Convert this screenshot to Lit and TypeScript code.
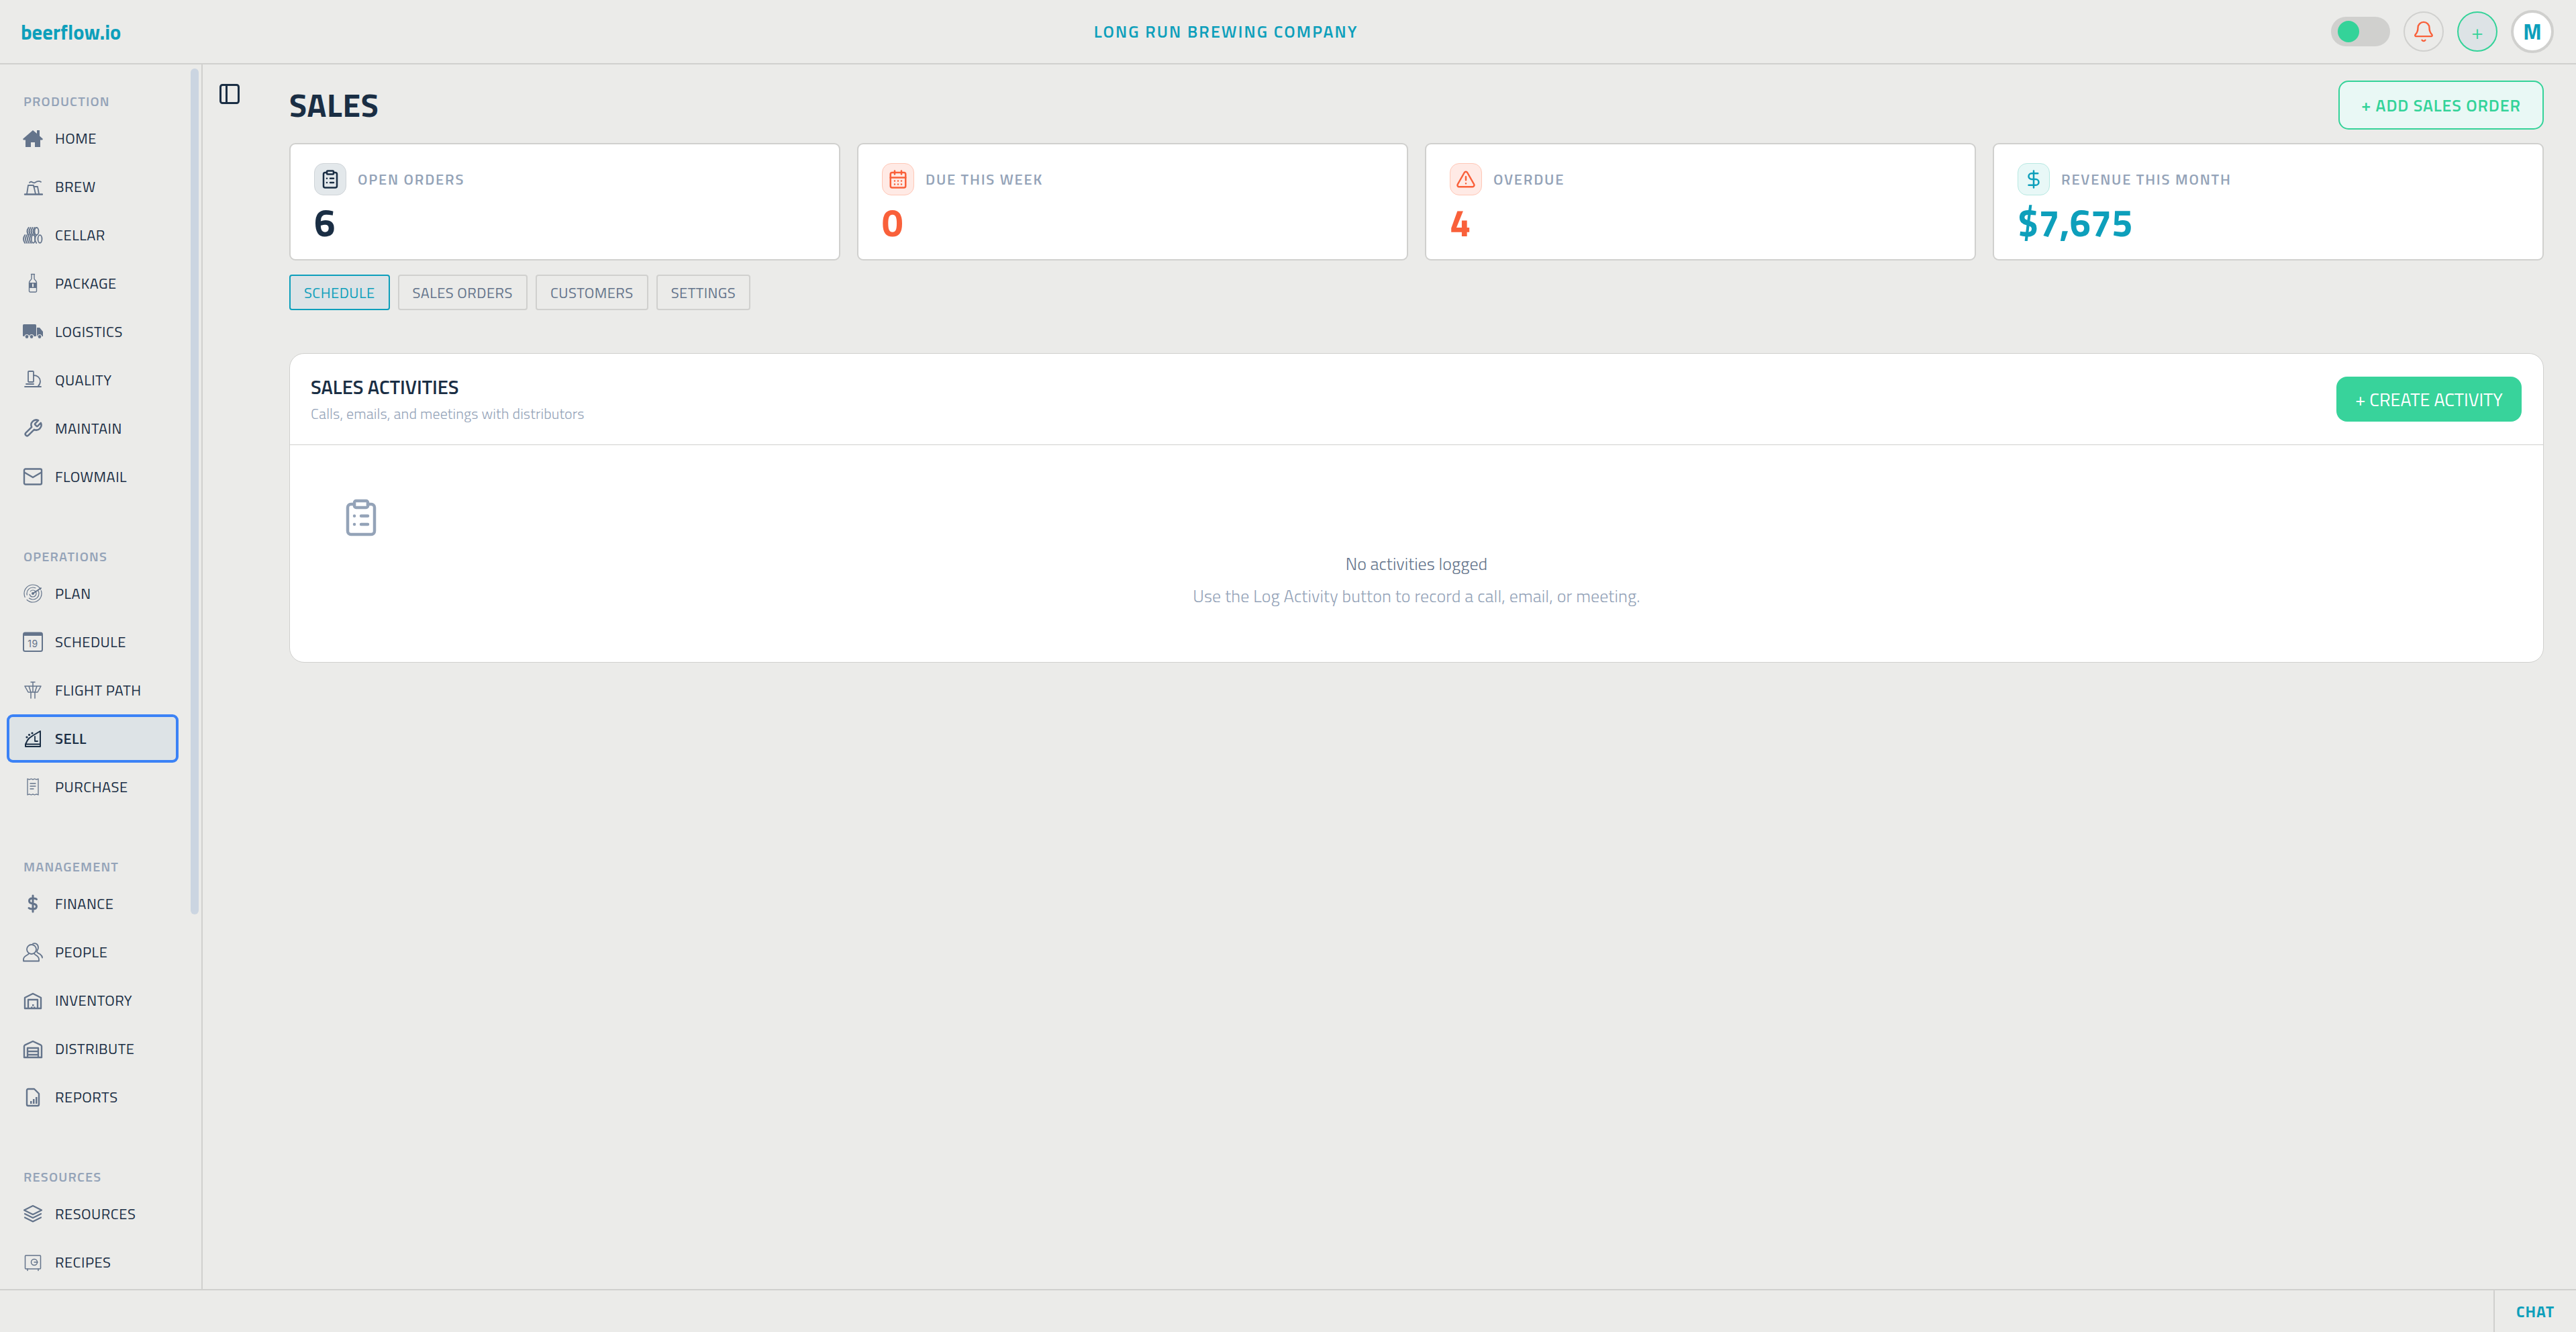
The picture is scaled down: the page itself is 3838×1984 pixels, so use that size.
import { LitElement, html, css, svg, nothing } from "lit";
import { customElement } from "lit/decorators.js";

const I = (body: unknown, vb = "0 0 30 30") => html`<svg viewBox=${vb} width="30" height="30" fill="none" stroke="currentColor" stroke-width="2" stroke-linecap="round" stroke-linejoin="round">${body}</svg>`;

const stripes = (xs: number[], y: number, h: number) => xs.map((x) => svg`<path stroke-width="1.900" d="M${x + 1.2} ${y}c-2.600 ${h * 0.3}-2.600 ${h * 0.7} 0 ${h}"/>`);

const icons: Record<string, unknown> = {
  home: I(svg`<path fill="currentColor" stroke="none" d="M15 3l6 5V3h4v8.500l5 4.500-1 1.500h-3V28h-8v-7h-6v7H4V17.500H1L0 16z"/>`),
  brew: I(svg`<path d="M3 26.500h26" stroke-width="2.400"/><path d="M6 26l2-13h8l3 13M16 15h6l2 11M10 9c3-4 5 2 8 0s6-3 9-1" stroke-width="1.800"/>`),
  cellar: I(svg`${stripes([7.5, 10.5, 13.5, 16.5], 4, 11)}<ellipse cx="20.500" cy="9.500" rx="3" ry="5.500" stroke-width="1.800"/>${stripes([2, 5, 8, 11], 15, 12)}<ellipse cx="15.500" cy="21" rx="2.800" ry="5.800" stroke-width="1.800"/>${stripes([19], 15, 12)}<ellipse cx="25.500" cy="21" rx="3" ry="5.800" stroke-width="1.800"/>`),
  package: I(svg`<path stroke-width="1.400" d="M12.500 1.500h5M13 2v6c0 2-3.500 3-3.500 6v12.500a1.500 1.500 0 0 0 1.500 1.500h8a1.500 1.500 0 0 0 1.500-1.500V14c0-3-3.500-4-3.500-6V2"/><rect x="10" y="14" width="10" height="8" fill="currentColor" stroke="none"/><rect x="14" y="15.500" width="2" height="5" fill="#ebebe9" stroke="none"/>`),
  logistics: I(svg`<rect x="0" y="4" width="20" height="18" rx="1.500" fill="currentColor" stroke="none"/><path fill="currentColor" stroke="none" d="M21 9h4l5 6v7H21z"/><g fill="currentColor" stroke="#ebebe9" stroke-width="1.200"><circle cx="6" cy="22.500" r="3"/><circle cx="13" cy="22.500" r="3"/><circle cx="25" cy="22.500" r="3"/></g>`),
  quality: I(svg`<rect x="8" y="2" width="8" height="16" rx="1" stroke-width="1.800"/><path d="M16 8c6 0 10 4 10 9 0 3-1 5-3 7M5 21h11M3 25h24" stroke-width="1.800"/>`),
  maintain: html`<svg viewBox="0 0 24 24" width="30" height="30" fill="none" stroke="currentColor" stroke-width="2" stroke-linecap="round" stroke-linejoin="round"><path d="M14.700 6.300a1 1 0 0 0 0 1.400l1.600 1.600a1 1 0 0 0 1.400 0l3.770-3.770a6 6 0 0 1-7.940 7.940l-6.910 6.910a2.120 2.120 0 0 1-3-3l6.910-6.910a6 6 0 0 1 7.940-7.940l-3.760 3.760z"/></svg>`,
  flowmail: I(svg`<rect x="2" y="3.500" width="26" height="23" rx="2" stroke-width="2.400"/><path d="M3 9l12 7 12-7" stroke-width="2.400"/>`),
  plan: I(svg`<circle cx="15" cy="15" r="13" stroke-width="1.200" stroke-dasharray="30 5 40 2"/><circle cx="15" cy="15" r="9" stroke-width="1.200" stroke-dasharray="20 6"/><circle cx="15" cy="15" r="5" stroke-width="1.200" stroke-dasharray="14 5"/><circle cx="15" cy="15" r="2" fill="currentColor" stroke="none"/><path d="M15 15l12-8" stroke-width="2"/>`),
  schedule: html`<svg viewBox="0 0 30 30" width="30" height="30" fill="none" stroke="currentColor" stroke-width="2" stroke-linecap="round" stroke-linejoin="round"><rect x="1" y="1.500" width="28" height="27.500" rx="2.500"/><rect x="1" y="1" width="28" height="5" fill="currentColor" stroke="none"/><text class="day" x="15" y="22.500" text-anchor="middle" stroke="none" fill="currentColor">19</text></svg>`,
  flight: I(svg`<path stroke-width="1.500" d="M12 3h6M15 3v6M3 9h24l-5 9H8zM9 9l3 9M21 9l-3 9M15 9v9M12 18v9M18 18v9"/>`),
  sell: I(svg`<path stroke-width="2" d="M26 4v23H4v-3.500l3-6 2.500-3 5.500-4zM4 23.500h22"/><path stroke-width="1.800" d="M18 12v7h4"/><g fill="currentColor" stroke="none"><circle cx="6" cy="13" r="1.600"/><circle cx="9.500" cy="9.500" r="1.600"/><circle cx="14" cy="7" r="1.600"/></g>`),
  purchase: I(svg`<path stroke-width="1.300" d="M7 3l2.700 1.200L12.500 3l2.500 1.200L17.500 3l2.800 1.200L23 3v24l-2.700-1.200-2.800 1.200-2.500-1.200-2.500 1.200-2.800-1.200L7 27zM11 10h8M11 14h8M11 18h5"/>`),
  finance: I(svg`<path stroke-width="3" d="M15 3v24M20.500 8.500C19 7 17 7 14.500 7 11.500 7 9.500 8.500 9.500 11s2 3.500 5.500 4 5.500 1.500 5.500 4-2 4-5.500 4c-2.500 0-4.500 0-6-1.500"/>`),
  people: I(svg`<circle cx="13" cy="11" r="7" stroke-width="1.800"/><path stroke-width="1.800" d="M9 17c0 3-8 3-8 9v2.500h23V26c0-6-7-6-7-9M15 2.500c4-1.500 8 1 8 6 0 3-2 4-2 6s2.500 2 5 4 3 3.500 3 5"/>`),
  inventory: I(svg`<path stroke-width="2.400" d="M3 27V11l12-6 12 6v16zM8 27V14h14v13"/><g fill="currentColor" stroke="none"><rect x="12" y="24.500" width="2.500" height="2.500"/><rect x="16" y="24.500" width="2.500" height="2.500"/><rect x="14" y="21" width="2.500" height="2.500"/></g>`),
  distribute: I(svg`<path stroke-width="2.400" d="M2 28V11.500a2 2 0 0 1 1-1.800L15 4l12 5.700a2 2 0 0 1 1 1.800V28zM7 28V14h16v14M7 19h16M7 24h16"/>`),
  reports: I(svg`<path stroke-width="2.400" d="M6 5a2 2 0 0 1 2-2h9l7 7v16a2 2 0 0 1-2 2H8a2 2 0 0 1-2-2z"/><g fill="currentColor" stroke="none"><rect x="11" y="21" width="2.500" height="4"/><rect x="15" y="18" width="2.500" height="7"/><rect x="19" y="15" width="2.500" height="10"/></g>`),
  resources: I(svg`<path stroke-width="2.200" d="M15 3l13 6.500L15 16 2 9.500zM3 15l12 6 12-6M3 20.500l12 6 12-6"/>`),
  recipes: I(svg`<rect x="3.500" y="5" width="23" height="20" rx="1" stroke-width="1.500"/><circle cx="17" cy="15" r="4.500" stroke-width="1.500"/><path stroke-width="1.500" d="M17 15h5M7 25v2.500M23 25v2.500"/>`),
};

const clip = svg`<rect x="8" y="2" width="8" height="4" rx="1"/><path d="M16 4h2a2 2 0 0 1 2 2v14a2 2 0 0 1-2 2H6a2 2 0 0 1-2-2V6a2 2 0 0 1 2-2h2"/><path d="M12 11h4M12 16h4M8 11h.01M8 16h.01"/>`;
const L = (b: unknown, size = 30, w = 2) => html`<svg viewBox="0 0 24 24" width=${size} height=${size} fill="none" stroke="currentColor" stroke-width=${w} stroke-linecap="round" stroke-linejoin="round">${b}</svg>`;

const sections: [string, [string, string][]][] = [
  ["PRODUCTION", [["home", "HOME"], ["brew", "BREW"], ["cellar", "CELLAR"], ["package", "PACKAGE"], ["logistics", "LOGISTICS"], ["quality", "QUALITY"], ["maintain", "MAINTAIN"], ["flowmail", "FLOWMAIL"]]],
  ["OPERATIONS", [["plan", "PLAN"], ["schedule", "SCHEDULE"], ["flight", "FLIGHT PATH"], ["sell", "SELL"], ["purchase", "PURCHASE"]]],
  ["MANAGEMENT", [["finance", "FINANCE"], ["people", "PEOPLE"], ["inventory", "INVENTORY"], ["distribute", "DISTRIBUTE"], ["reports", "REPORTS"]]],
  ["RESOURCES", [["resources", "RESOURCES"], ["recipes", "RECIPES"]]],
];

const stats = [
  { k: "navy", label: "OPEN ORDERS", value: "6", icon: clip },
  { k: "orange", label: "DUE THIS WEEK", value: "0", icon: svg`<path d="M8 2v4M16 2v4"/><rect x="3" y="4" width="18" height="18" rx="2"/><path d="M3 10h18M8 14h.01M12 14h.01M16 14h.01M8 18h.01M12 18h.01M16 18h.01"/>` },
  { k: "orange", label: "OVERDUE", value: "4", icon: svg`<path d="m21.730 18-8-14a2 2 0 0 0-3.480 0l-8 14A2 2 0 0 0 4 21h16a2 2 0 0 0 1.730-3"/><path d="M12 9v4M12 17h.01"/>` },
  { k: "teal", label: "REVENUE THIS MONTH", value: "$7,675", icon: svg`<path d="M12 2v20M17 5H9.500a3.500 3.500 0 0 0 0 7h5a3.500 3.500 0 0 1 0 7H6"/>` },
];

@customElement("app-root")
export class AppRoot extends LitElement {
  static styles = css`
    :host { display: block; width: 3838px; height: 1984px; overflow: hidden; background: #ebebe9; font-family: "Titillium Web", "Roboto", sans-serif; color: #1a2e44; }
    .shell { display: grid; grid-template-rows: 96px 1fr 64px; height: 100%; }
    .top { display: flex; align-items: center; justify-content: space-between; padding: 0 33px 0 31px; border-bottom: 2px solid #d0d0ce; }
    .logo { font-size: 30.500px; font-weight: 700; color: #0d9fbb; }
    .company { font-size: 25px; font-weight: 600; letter-spacing: 2.100px; color: #0d9fbb; }
    .actions { display: flex; align-items: center; gap: 20px; }
    .toggle { width: 88px; height: 44px; border-radius: 22px; background: #d0d0ce; display: flex; align-items: center; padding-left: 10px; box-sizing: border-box; }
    .knob { width: 32px; height: 32px; border-radius: 50%; background: #34d399; }
    .round { width: 60px; height: 60px; box-sizing: border-box; border-radius: 50%; border: 2px solid #d0d0ce; display: flex; align-items: center; justify-content: center; color: #f9603a; }
    .round.add { border-color: #34d399; background: #dde3e6; color: #34d399; font-size: 32px; font-weight: 300; }
    .round.user { width: 64px; height: 64px; border-width: 4px; background: #fff; color: #0d9fbb; font-size: 32px; font-weight: 700; }
    .middle { display: flex; min-height: 0; }
    .side { position: relative; width: 302px; flex: none; box-sizing: border-box; border-right: 2px solid #d0d0ce; padding: 43px 34px 0 10px; overflow: hidden; }
    .thumb { position: absolute; left: 284px; top: 6px; width: 12px; height: 1260px; border-radius: 6px; background: #cbd5e1; }
    .section + .section { margin-top: 71px; }
    .sec-label { font-size: 20px; line-height: 24px; font-weight: 600; letter-spacing: 1.200px; color: #94a3b8; padding-left: 25px; margin-bottom: 7px; }
    .row { display: flex; align-items: center; height: 72px; box-sizing: border-box; padding-left: 24px; gap: 18px; border-radius: 9px; font-size: 22px; letter-spacing: 0.500px; white-space: nowrap; }
    .row svg { display: block; flex: none; color: #64748b; }
    .row .day { font-size: 14px; font-family: "Inter", sans-serif; }
    .row.on { background: #dde3e6; box-shadow: inset 0 0 0 4px #3b82f6; font-weight: 600; }
    .row.on svg { color: #1a2e44; }
    .rail { width: 129px; flex: none; padding: 26px 0 0 22px; box-sizing: border-box; color: #1a2e44; }
    .rail svg { display: block; }
    .content { flex: 1; min-width: 0; padding: 24px 48px 0 0; }
    .head { display: flex; align-items: center; justify-content: space-between; height: 73px; }
    h1 { margin: 0; font-size: 48px; line-height: 56px; font-weight: 700; letter-spacing: 0.700px; }
    .add-order { height: 73px; width: 306px; box-sizing: border-box; border: 2px solid #34d399; border-radius: 15px; background: #e9f8f5; color: #34d399; font: 600 25px "Titillium Web", sans-serif; letter-spacing: 0.900px; display: flex; align-items: center; justify-content: center; white-space: nowrap; }
    .stats { display: grid; grid-template-columns: repeat(4, 1fr); gap: 25px; margin-top: 20px; }
    .stat { height: 175px; box-sizing: border-box; padding: 28px 35px; background: #fff; border: 2px solid #d0d0ce; border-radius: 9px; }
    .stat-head { display: flex; align-items: center; gap: 17px; }
    .badge { width: 48px; height: 48px; box-sizing: border-box; border-radius: 14px; display: flex; align-items: center; justify-content: center; border: 1px solid; flex: none; }
    .badge.navy { background: #e3e8eb; border-color: #cfd4d8; color: #1a2e44; }
    .badge.orange { background: #ffeae5; border-color: #ffc7b6; color: #f9603a; }
    .badge.teal { background: #e8f8f7; border-color: #b7e9e2; color: #0d9fbb; }
    .stat-label { font-size: 22px; font-weight: 600; letter-spacing: 1.800px; color: #94a3b8; white-space: nowrap; }
    .value { margin-top: 9px; font-size: 56px; line-height: 64px; font-weight: 700; }
    .value.navy { color: #1a2e44; }
    .value.orange { color: #f9603a; }
    .value.teal { color: #0d9fbb; }
    .tabs { display: flex; gap: 12px; margin-top: 21px; }
    .tab { height: 53px; box-sizing: border-box; padding: 0 20px; border: 2px solid #d0d0ce; border-radius: 4px; display: flex; align-items: center; font-size: 22px; letter-spacing: 0.440px; color: #64748b; }
    .tab.on { border-color: #0d9fbb; background: #dde3e6; color: #0d9fbb; }
    .panel { margin-top: 64px; background: #fff; border: 1px solid #d0d0ce; border-radius: 22px; }
    .panel-head { height: 136px; box-sizing: border-box; border-bottom: 1px solid #d0d0ce; display: flex; align-items: center; justify-content: space-between; padding: 0 32px 0 31px; }
    .panel-title { font-size: 29px; line-height: 44px; font-weight: 600; }
    .panel-sub { font-size: 22px; line-height: 37px; font-weight: 300; letter-spacing: 0.100px; color: #94a3b8; }
    .create { height: 67px; width: 276px; border-radius: 16px; background: #38d39b; color: #fff; font-size: 27px; display: flex; align-items: center; justify-content: center; white-space: nowrap; }
    .empty { padding: 78px 0 81px; text-align: center; }
    .empty svg { display: block; margin-left: 76px; color: #94a3b8; }
    .empty-title { margin-top: 21px; font-size: 26px; line-height: 36px; font-weight: 300; color: #64748b; }
    .empty-sub { margin-top: 13px; font-size: 26px; line-height: 34px; font-weight: 300; letter-spacing: 0.100px; color: #94a3b8; }
    .foot { display: flex; justify-content: flex-end; border-top: 2px solid #d0d0ce; }
    .chat { width: 123px; box-sizing: border-box; border-left: 2px solid #d0d0ce; display: flex; align-items: center; justify-content: center; font-size: 23px; font-weight: 700; letter-spacing: 1px; color: #0d9fbb; }
  `;

  render() {
    return html`<div class="shell">
      <header class="top">
        <div class="logo">beerflow.io</div>
        <div class="company">LONG RUN BREWING COMPANY</div>
        <div class="actions">
          <div class="toggle"><div class="knob"></div></div>
          <div class="round">${L(svg`<path d="M10.268 21a2 2 0 0 0 3.464 0"/><path d="M3.262 15.326A1 1 0 0 0 4 17h16a1 1 0 0 0 .74-1.673C19.410 13.956 18 12.499 18 8A6 6 0 0 0 6 8c0 4.499-1.411 5.956-2.738 7.326"/>`, 34, 1.7)}</div>
          <div class="round add">+</div>
          <div class="round user">M</div>
        </div>
      </header>
      <div class="middle">
        <nav class="side">
          ${sections.map(([name, items]) => html`<div class="section">
            <div class="sec-label">${name}</div>
            ${items.map(([ic, label]) => html`<div class="row ${label === "SELL" ? "on" : ""}">${icons[ic] ?? nothing}<span>${label}</span></div>`)}
          </div>`)}
          <div class="thumb"></div>
        </nav>
        <div class="rail">${L(svg`<rect width="18" height="18" x="3" y="3" rx="2"/><path d="M9 3v18"/>`, 36, 2)}</div>
        <main class="content">
          <div class="head"><h1>SALES</h1><div class="add-order">+ ADD SALES ORDER</div></div>
          <div class="stats">
            ${stats.map((s) => html`<div class="stat">
              <div class="stat-head"><div class="badge ${s.k}">${L(s.icon, 30, 2)}</div><div class="stat-label">${s.label}</div></div>
              <div class="value ${s.k}">${s.value}</div>
            </div>`)}
          </div>
          <div class="tabs">
            <div class="tab on">SCHEDULE</div><div class="tab">SALES ORDERS</div><div class="tab">CUSTOMERS</div><div class="tab">SETTINGS</div>
          </div>
          <section class="panel">
            <div class="panel-head">
              <div><div class="panel-title">SALES ACTIVITIES</div><div class="panel-sub">Calls, emails, and meetings with distributors</div></div>
              <div class="create">+ CREATE ACTIVITY</div>
            </div>
            <div class="empty">
              ${L(clip, 60, 1.8)}
              <div class="empty-title">No activities logged</div>
              <div class="empty-sub">Use the Log Activity button to record a call, email, or meeting.</div>
            </div>
          </section>
        </main>
      </div>
      <footer class="foot"><div class="chat">CHAT</div></footer>
    </div>`;
  }
}
